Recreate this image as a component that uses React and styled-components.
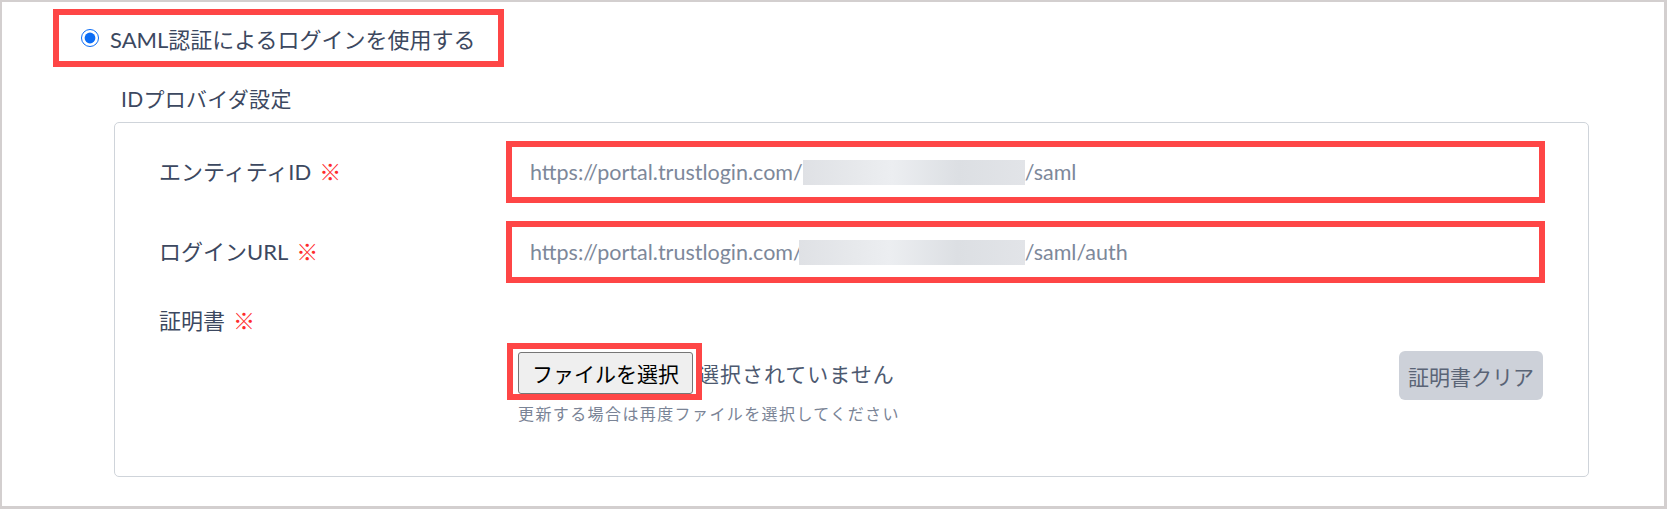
import React from 'react';
import styled, { createGlobalStyle } from 'styled-components';

const GlobalStyle = createGlobalStyle`
  html, body {
    margin: 0;
    padding: 0;
    background: #ffffff;
  }
  body {
    font-family: Lato, "Noto Sans CJK JP", sans-serif;
    color: #3c4860;
  }
`;

const Frame = styled.div`
  width: 1667px;
  height: 509px;
  box-sizing: border-box;
  border-style: solid;
  border-color: #d3cfcf;
  border-width: 2px 3px 3px 2px;
  padding: 7px 0 0 51px;
  background: #fff;
`;

const RadioBox = styled.label`
  display: flex;
  align-items: center;
  box-sizing: border-box;
  width: 451px;
  height: 58px;
  border: 6px solid #fe4646;
  padding-left: 22px;
  font-size: 22px;
  color: #3c4860;
`;

const Radio = styled.input`
  width: 18px;
  height: 18px;
  margin: 0 11px 0 0;
  accent-color: #0b6cf5;
`;

const Section = styled.div`
  margin-left: 61px;
`;

const Heading = styled.div`
  margin-top: 18px;
  margin-bottom: 9px;
  padding-left: 7px;
  line-height: 28px;
  font-size: 21px;
  letter-spacing: 0.3px;
  color: #3c4860;
`;

const Card = styled.div`
  width: 1475px;
  box-sizing: border-box;
  border: 1px solid #cfd4da;
  border-radius: 5px;
  padding: 18px 43px 50px 44px;
  display: flex;
  flex-direction: column;
  gap: 18px;
`;

const Row = styled.div`
  display: grid;
  grid-template-columns: 347px 1039px;
  align-items: ${({ top }) => (top ? 'start' : 'center')};
`;

const Label = styled.div`
  font-size: 22px;
  line-height: 40px;
  color: #3c4860;
`;

const Req = styled.span`
  color: #ff2b2b;
  margin-left: 8px;
`;

const UrlInput = styled.div`
  box-sizing: border-box;
  height: 62px;
  border: 6px solid #fe4646;
  padding-left: 18px;
  display: flex;
  align-items: center;
  font-size: 21.5px;
  color: #7d889a;
  white-space: nowrap;
`;

const Redact = styled.span`
  display: inline-block;
  width: ${({ w }) => w}px;
  height: 25px;
  margin-left: ${({ shift }) => shift || 0}px;
  background: linear-gradient(90deg, #dfe1e5 0%, #e7e9ec 25%, #eceef1 40%, #dcdfe3 70%, #e2e4e8 100%);
`;

const FileCol = styled.div`
  padding-top: 50px;
`;

const FileRow = styled.div`
  display: flex;
  justify-content: space-between;
  align-items: flex-start;
`;

const FileGroup = styled.div`
  display: flex;
  align-items: center;
  margin-left: 12px;
  margin-top: 1px;
`;

const Marked = styled.span`
  position: relative;
  display: inline-flex;
`;

const MarkBox = styled.span`
  position: absolute;
  left: -11px;
  top: -9px;
  right: -9px;
  bottom: -6px;
  border: 6px solid #fe4646;
  pointer-events: none;
`;

const FileButton = styled.button`
  height: 42px;
  padding: 0 13px;
  border: 1px solid #767676;
  border-radius: 3px;
  background: #efefef;
  color: #000;
  font-family: "Noto Sans CJK JP", sans-serif;
  font-size: 21px;
`;

const FileStatus = styled.span`
  margin-left: 5px;
  font-size: 21px;
  letter-spacing: 1px;
  color: #4d5970;
`;

const ClearButton = styled.button`
  width: 144px;
  height: 49px;
  margin-right: 2px;
  padding: 0;
  border: none;
  border-radius: 6px;
  background: #cdd1d9;
  color: #5a6476;
  font-family: "Noto Sans CJK JP", sans-serif;
  font-size: 21px;
`;

const Help = styled.div`
  margin: 2px 0 0 12px;
  line-height: 24px;
  font-size: 16px;
  letter-spacing: 1.4px;
  color: #7a8496;
`;

export default function App() {
  return (
    <>
      <GlobalStyle />
      <Frame>
        <RadioBox>
          <Radio type="radio" checked readOnly />
          SAML認証によるログインを使用する
        </RadioBox>
        <Section>
          <Heading>IDプロバイダ設定</Heading>
          <Card>
            <Row>
              <Label>エンティティID<Req>※</Req></Label>
              <UrlInput>
                https://portal.trustlogin.com/<Redact w={222} />/saml
              </UrlInput>
            </Row>
            <Row>
              <Label>ログインURL<Req>※</Req></Label>
              <UrlInput>
                https://portal.trustlogin.com/<Redact w={226} shift={-4} />/saml/auth
              </UrlInput>
            </Row>
            <Row top>
              <Label>証明書<Req>※</Req></Label>
              <FileCol>
                <FileRow>
                  <FileGroup>
                    <Marked>
                      <FileButton type="button">ファイルを選択</FileButton>
                      <MarkBox />
                    </Marked>
                    <FileStatus>選択されていません</FileStatus>
                  </FileGroup>
                  <ClearButton type="button">証明書クリア</ClearButton>
                </FileRow>
                <Help>更新する場合は再度ファイルを選択してください</Help>
              </FileCol>
            </Row>
          </Card>
        </Section>
      </Frame>
    </>
  );
}
